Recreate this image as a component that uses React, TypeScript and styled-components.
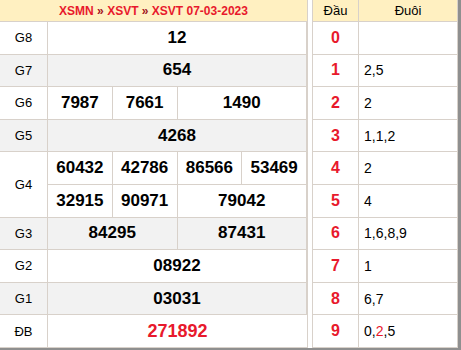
import React from 'react'
import styled, { createGlobalStyle } from 'styled-components'

const GlobalStyle = createGlobalStyle`
  html, body {
    margin: 0;
    padding: 0;
    background: #ffffff;
    font-family: 'Liberation Sans', Arial, sans-serif;
  }
`;

type Row = {
  label: string,
  cells: { value: string, span: number }[][],
  shaded?: boolean,
  special?: boolean,
}

const rows: Row[] = [
  { label: 'G8', cells: [[{ value: '12', span: 4 }]] },
  { label: 'G7', cells: [[{ value: '654', span: 4 }]], shaded: true },
  { label: 'G6', cells: [[{ value: '7987', span: 1 }, { value: '7661', span: 1 }, { value: '1490', span: 2 }]] },
  { label: 'G5', cells: [[{ value: '4268', span: 4 }]], shaded: true },
  {
    label: 'G4',
    cells: [
      [{ value: '60432', span: 1 }, { value: '42786', span: 1 }, { value: '86566', span: 1 }, { value: '53469', span: 1 }],
      [{ value: '32915', span: 1 }, { value: '90971', span: 1 }, { value: '79042', span: 2 }],
    ],
  },
  { label: 'G3', cells: [[{ value: '84295', span: 2 }, { value: '87431', span: 2 }]], shaded: true },
  { label: 'G2', cells: [[{ value: '08922', span: 4 }]] },
  { label: 'G1', cells: [[{ value: '03031', span: 4 }]], shaded: true },
  { label: 'ĐB', cells: [[{ value: '271892', span: 4 }]], special: true },
]

const tails: { head: string, parts: { v: string, hot?: boolean }[] }[] = [
  { head: '0', parts: [] },
  { head: '1', parts: [{ v: '2' }, { v: '5' }] },
  { head: '2', parts: [{ v: '2' }] },
  { head: '3', parts: [{ v: '1' }, { v: '1' }, { v: '2' }] },
  { head: '4', parts: [{ v: '2' }] },
  { head: '5', parts: [{ v: '4' }] },
  { head: '6', parts: [{ v: '1' }, { v: '6' }, { v: '8' }, { v: '9' }] },
  { head: '7', parts: [{ v: '1' }] },
  { head: '8', parts: [{ v: '6' }, { v: '7' }] },
  { head: '9', parts: [{ v: '0' }, { v: '2', hot: true }, { v: '5' }] },
]

export default function App() {
  return (
    <>
      <GlobalStyle />
      <Frame>
        <ResultTable>
          <HeaderCell $span={5}>
            <span>
              <Crumb>XSMN</Crumb> <Sep>»</Sep> <Crumb>XSVT</Crumb> <Sep>»</Sep> <Crumb>XSVT 07-03-2023</Crumb>
            </span>
          </HeaderCell>
          {rows.map(row => (
            <React.Fragment key={row.label}>
              <LabelCell $rows={row.cells.length} $shaded={row.shaded}>{row.label}</LabelCell>
              {row.cells.map((line, i) =>
                line.map((c, j) => (
                  <NumberCell key={`${row.label}-${i}-${j}`} $span={c.span} $shaded={row.shaded} $special={row.special}>
                    {c.value}
                  </NumberCell>
                ))
              )}
            </React.Fragment>
          ))}
        </ResultTable>
        <LotoTable>
          <HeadTitle>Đầu</HeadTitle>
          <HeadTitle>Đuôi</HeadTitle>
          {tails.map(t => (
            <React.Fragment key={t.head}>
              <HeadDigit>{t.head}</HeadDigit>
              <TailCell>
                {t.parts.map((p, i) => (
                  <React.Fragment key={i}>
                    {i > 0 && ','}
                    <TailNum $hot={p.hot}>{p.v}</TailNum>
                  </React.Fragment>
                ))}
              </TailCell>
            </React.Fragment>
          ))}
        </LotoTable>
      </Frame>
    </>
  )
}

const Frame = styled.div`
  box-sizing: border-box;
  width: 461px;
  height: 350px;
  display: flex;
  gap: 4px;
  border-right: 3px solid #8f8f8f;
  border-bottom: 2px solid #8f8f8f;
  background: #ffffff;
  overflow: hidden;
`;

const ResultTable = styled.div`
  box-sizing: border-box;
  width: 308px;
  height: 348px;
  display: grid;
  grid-template-columns: 48px repeat(4, 1fr);
  grid-template-rows: 22px repeat(10, 1fr);
  border-right: 1px solid #d8d1ca;
`;

const Cell = styled.div`
  box-sizing: border-box;
  display: flex;
  align-items: center;
  justify-content: center;
  border-bottom: 1px solid #d8d1ca;
`;

const HeaderCell = styled(Cell)<{ $span: number }>`
  grid-column: span ${p => p.$span};
  background: #fff0c1;
  font-size: 12px;
  font-weight: bold;
  color: #e8192c;
`;

const Crumb = styled.span`
  color: #e8192c;
`;

const Sep = styled.span`
  color: #a0141e;
`;

const LabelCell = styled(Cell)<{ $rows: number, $shaded?: boolean }>`
  grid-row: span ${p => p.$rows};
  border-right: 1px solid #d8d1ca;
  background: ${p => (p.$shaded ? '#f2f2f2' : '#ffffff')};
  font-size: 13px;
  color: #000;
`;

const NumberCell = styled(Cell)<{ $span: number, $shaded?: boolean, $special?: boolean }>`
  grid-column: span ${p => p.$span};
  border-right: 1px solid #d8d1ca;
  &:last-child { border-right: none; }
  background: ${p => (p.$shaded ? '#f2f2f2' : '#ffffff')};
  font-size: ${p => (p.$special ? '18px' : '17px')};
  font-weight: bold;
  color: ${p => (p.$special ? '#e8192c' : '#000')};
`;

const LotoTable = styled.div`
  box-sizing: border-box;
  width: 146px;
  height: 348px;
  display: grid;
  grid-template-columns: 46px 1fr;
  grid-template-rows: 22px repeat(10, 1fr);
  border-left: 1px solid #d8d1ca;
  border-right: 1px solid #d8d1ca;
`;

const HeadTitle = styled(Cell)`
  background: #fff0c1;
  font-size: 13px;
  color: #000;
  &:first-child { border-right: 1px solid #d8d1ca; }
`;

const HeadDigit = styled(Cell)`
  border-right: 1px solid #d8d1ca;
  font-size: 16px;
  font-weight: bold;
  color: #e8192c;
`;

const TailCell = styled(Cell)`
  justify-content: flex-start;
  padding-left: 5px;
  font-size: 14px;
  color: #000;
`;

const TailNum = styled.span<{ $hot?: boolean }>`
  color: ${p => (p.$hot ? '#e8192c' : '#000')};
`;
